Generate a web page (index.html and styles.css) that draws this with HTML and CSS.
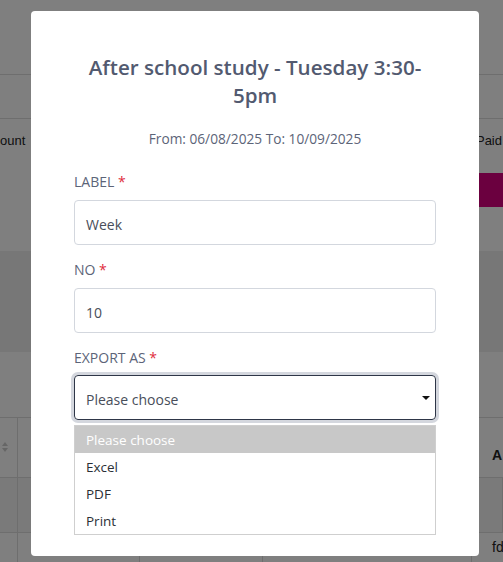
FILE: index.html
```html
<!DOCTYPE html>
<html>
<head>
<meta charset="utf-8">
<link rel="stylesheet" href="styles.css">
</head>
<body>
<div class="page">
  <div class="bg-top"></div>
  <div class="bg-row2"></div>
  <div class="bg-row3">
    <div class="bg-cols">
      <span class="bg-text">ount</span>
      <span class="bg-text">Paid</span>
    </div>
    <div class="bg-btn-row"><span class="bg-btn"></span></div>
  </div>
  <div class="bg-band"></div>
  <div class="bg-row"></div>
  <div class="bg-thead">
    <div class="bg-cell first"><span class="sort"></span></div>
    <div class="bg-cell wide"></div>
    <div class="bg-cell last"><b>A</b></div>
  </div>
  <div class="bg-tr shaded">
    <div class="bg-cell first"></div>
    <div class="bg-cell wide"></div>
  </div>
  <div class="bg-tr">
    <div class="bg-cell first"></div>
    <div class="bg-cell c2"></div>
    <div class="bg-cell c3"></div>
    <div class="bg-cell c4"></div>
    <div class="bg-cell last">fd</div>
  </div>
</div>

<div class="overlay">
  <div class="modal">
    <h2 class="title">After school study - Tuesday 3:30-5pm</h2>
    <p class="subtitle">From: 06/08/2025 To: 10/09/2025</p>

    <label class="field-label">LABEL <span class="req">*</span></label>
    <div class="input">Week</div>

    <label class="field-label">NO <span class="req">*</span></label>
    <div class="input">10</div>

    <label class="field-label">EXPORT AS <span class="req">*</span></label>
    <div class="select">
      <span>Please choose</span>
      <span class="caret"></span>
    </div>
    <ul class="listbox">
      <li class="opt active">Please choose</li>
      <li class="opt">Excel</li>
      <li class="opt">PDF</li>
      <li class="opt">Print</li>
    </ul>
  </div>
</div>
</body>
</html>
```

FILE: styles.css
```css
* { box-sizing: border-box; }
html, body { margin: 0; padding: 0; }
body {
  width: 503px;
  height: 562px;
  overflow: hidden;
  font-family: "Open Sans", "Noto Sans", sans-serif;
  background: #fff;
  position: relative;
}

/* ---------- background page ---------- */
.page { width: 503px; }
.bg-top { height: 75px; border-bottom: 1px solid #dcdcdc; }
.bg-row2 { height: 44px; border-bottom: 1px solid #dcdcdc; }
.bg-row3 { height: 132px; }
.bg-cols {
  display: flex;
  justify-content: space-between;
  padding-top: 14px;
  height: 54px;
  padding-right: 1px;
}
.bg-text { font-size: 13px; color: #222; font-family: "Liberation Sans", sans-serif; }
.bg-btn-row { display: flex; justify-content: flex-end; }
.bg-btn { width: 24px; height: 34px; background: #d6007f; display: block; }
.bg-band { height: 101px; background: #eeeeee; }
.bg-row { height: 66px; border-bottom: 1px solid #dcdcdc; }
.bg-thead { height: 60px; display: flex; border-bottom: 1px solid #dcdcdc; }
.bg-tr { height: 55px; display: flex; border-bottom: 1px solid #dcdcdc; }
.bg-tr.shaded { background: #f4f4f4; }
.bg-cell { border-right: 1px solid #dcdcdc; height: 100%; position: relative; }
.bg-cell.first { width: 18px; }
.bg-cell.wide { flex: 1; }
.bg-cell.c2 { width: 122px; }
.bg-cell.c3 { width: 123px; }
.bg-cell.c4 { flex: 1; }
.bg-cell.last {
  width: 31px; border-right: 0;
  font-family: "Liberation Sans", sans-serif; font-size: 14px; color: #222;
  padding-left: 20px; white-space: nowrap;
  display: flex; align-items: flex-start; padding-top: 29px;
}
.bg-tr .bg-cell.last { padding-top: 6px; }
.sort {
  position: absolute; left: 2px; top: 24px;
  width: 0; height: 0;
  border-left: 3px solid transparent; border-right: 3px solid transparent;
  border-bottom: 4px solid #ccc;
}
.sort::after {
  content: ""; position: absolute; left: -3px; top: 6px;
  border-left: 3px solid transparent; border-right: 3px solid transparent;
  border-top: 4px solid #ccc;
}

/* ---------- overlay + modal ---------- */
.overlay {
  position: absolute;
  inset: 0;
  background: rgba(0, 0, 0, 0.5);
  padding-top: 11px;
  padding-left: 31px;
}
.modal {
  width: 448px;
  height: 545px;
  background: #fff;
  border-radius: 4px;
  padding: 42px 43px 21px;
  display: flex;
  flex-direction: column;
}
.title {
  margin: 0;
  font-size: 20.6px;
  line-height: 28px;
  font-weight: 600;
  color: #525a70;
  text-align: center;
}
.subtitle {
  margin: 20px 0 0;
  font-size: 13.7px;
  line-height: 20px;
  color: #5c6478;
  text-align: center;
}
.field-label {
  display: block;
  font-size: 14px;
  line-height: 20px;
  color: #5c6478;
  margin-top: 16px;
}
.subtitle + .field-label { margin-top: 23px; }
.req { color: #e02d3c; }
.input {
  margin-top: 8px;
  height: 45px;
  border: 1px solid #d3d7de;
  border-radius: 4px;
  padding: 3px 11px 0;
  display: flex;
  align-items: center;
  font-size: 14px;
  color: #484e5a;
}
.input + .field-label { margin-top: 15px; }
.select {
  margin-top: 7px;
  height: 45px;
  border: 1px solid #2e3647;
  border-radius: 4px;
  box-shadow: 0 0 0 3px #d4d7de;
  padding: 3px 11px 0;
  display: flex;
  align-items: center;
  justify-content: space-between;
  font-size: 14px;
  color: #484e5a;
}
.caret {
  width: 0; height: 0;
  border-left: 4px solid transparent;
  border-right: 4px solid transparent;
  border-top: 4px solid #111;
  margin-right: -6px;
  margin-top: -3px;
}
.listbox {
  list-style: none;
  margin: 5px 0 0;
  padding: 0;
  border: 1px solid #cfcfcf;
}
.opt {
  height: 27px;
  line-height: 29px;
  padding: 0 11px;
  font-size: 13.5px;
  color: #2b2f36;
}
.opt.active { background: #c8c8c8; color: #fff; }
```
